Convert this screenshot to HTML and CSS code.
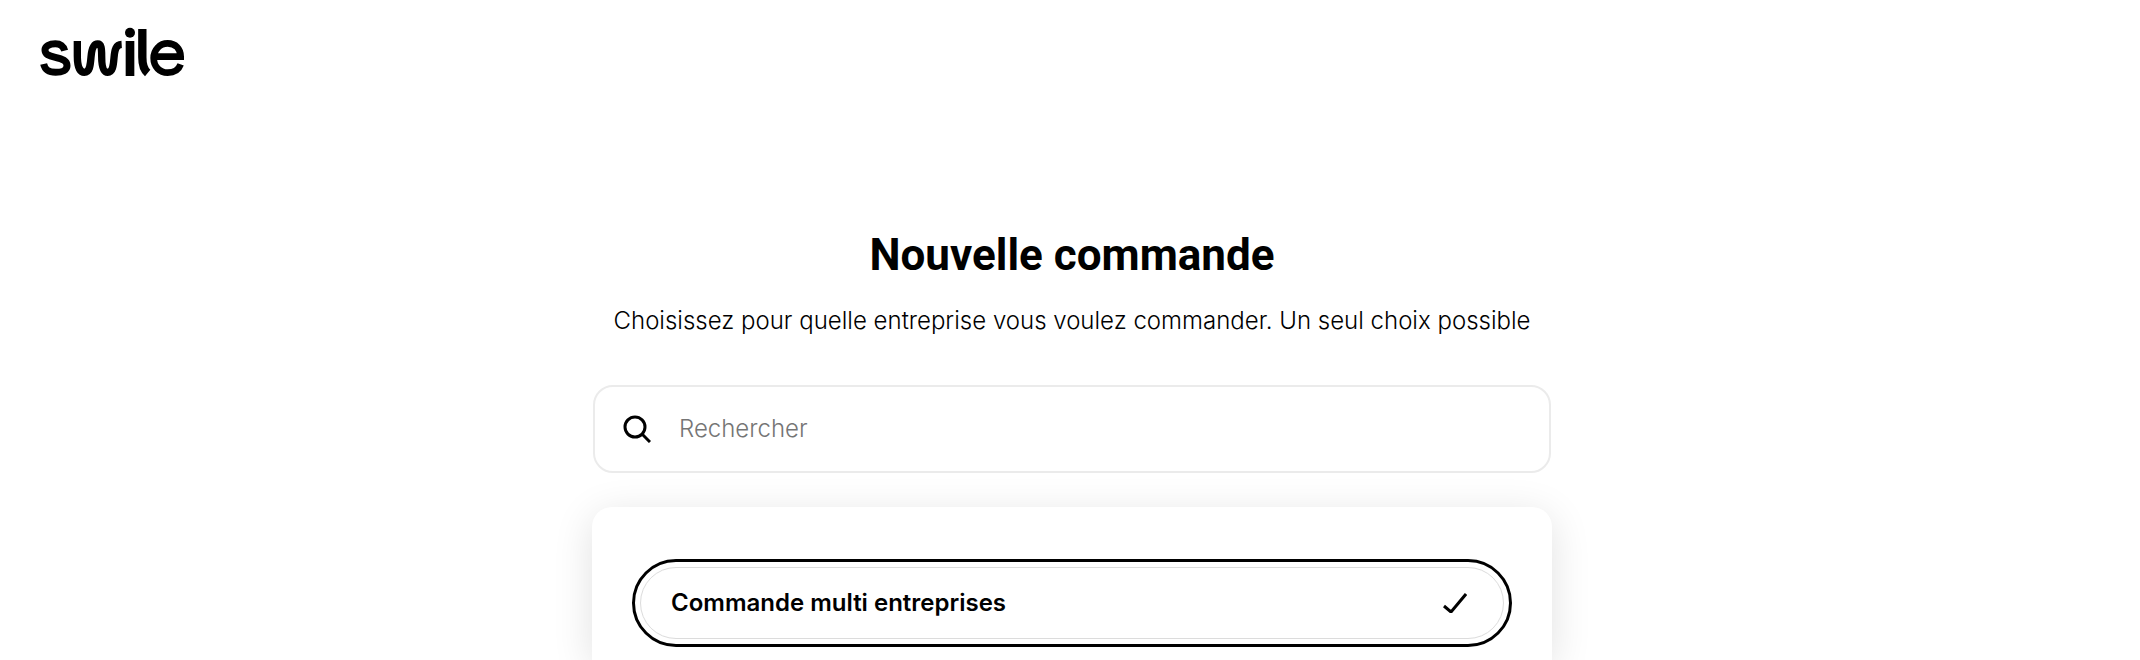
FILE: index.html
```html
<!DOCTYPE html>
<html lang="fr">
<head>
<meta charset="utf-8">
<meta name="viewport" content="width=device-width, initial-scale=1">
<title>Nouvelle commande – Swile</title>
<link rel="stylesheet" href="styles.css">
</head>
<body>
<header class="header">
  <a class="logo" href="#" aria-label="swile">
    <svg class="logo-mark" viewBox="30 21 435 150" aria-hidden="true">
      <g fill="none" stroke="currentColor" stroke-width="22">
        <path stroke-width="21" d="M104 92C100 77 90 71 76 71C58 71 45 79 45 90C45 103 56 107 76 112C98 117 111 122 111 137C111 150 97 157 77 157C55 157 45 149 41 132"/>
        <path d="M142 63V108C142 138 149 157 163 157C179 157 181 138 183 112C185 86 191 72 203 72C214 72 215 86 215 108C215 138 219 157 233 157C248 157 250 138 252 114C254 88 258 74 275 73"/>
        <path stroke-width="26" d="M300 63V168"/>
        <path stroke-width="25" d="M337 27V112C337 136 341 149 353 159"/>
        <path stroke-width="20" d="M372 110H452C452 86 436 70 413 70C389 70 371 90 371 114C371 140 389 158 413 158C432 158 446 149 452 133"/>
      </g>
      <circle cx="300" cy="38" r="15" fill="currentColor"/>
    </svg>
  </a>
</header>
<main class="main">
  <h1 class="title">Nouvelle commande</h1>
  <p class="subtitle">Choisissez pour quelle entreprise vous voulez commander. Un seul choix possible</p>
  <label class="search">
    <svg class="search-icon" viewBox="0 0 28 28" aria-hidden="true"><circle cx="12" cy="12" r="10"/><path d="M19 19l8 8"/></svg>
    <input class="search-input" type="search" placeholder="Rechercher" aria-label="Rechercher">
  </label>
  <section class="card">
    <button class="option" type="button" aria-pressed="true">
      <span class="option-label">Commande multi entreprises</span>
      <svg class="check" viewBox="0 0 24 20" aria-hidden="true"><path d="M1 13l7 6L23 1"/></svg>
    </button>
  </section>
</main>
</body>
</html>
```
FILE: styles.css
```css
* { box-sizing: border-box; }
body {
  display: flex;
  flex-direction: column;
  min-height: 100vh;
  margin: 0;
  background: #fff;
  color: #000;
  font-family: Inter, "Liberation Sans", sans-serif;
}
.header { padding: 27px 40px 0; }
.logo { display: block; width: fit-content; color: #000; }
.logo-mark { display: block; width: 145px; height: 50px; }
.main {
  display: flex;
  flex: 1;
  flex-direction: column;
  width: 100%;
  max-width: 964px;
  margin: 0 auto;
  padding: 150px 0 0 4px;
}
.title {
  margin: 0;
  font-family: Roboto, Inter, sans-serif;
  font-size: 44px;
  line-height: 56px;
  font-weight: 700;
  text-align: center;
}
.subtitle {
  margin: 22px 0 48px;
  font-size: 24px;
  line-height: 32px;
  font-weight: 300;
  text-align: center;
}
.search {
  display: flex;
  align-items: center;
  gap: 28px;
  height: 88px;
  margin: 0 1px;
  padding: 0 28px;
  border: 2px solid #ebebeb;
  border-radius: 20px;
}
.search-icon { width: 28px; height: 28px; fill: none; stroke: #000; stroke-width: 3; }
.search-input {
  flex: 1;
  min-width: 0;
  padding: 0;
  border: 0;
  outline: 0;
  background: transparent;
  font: inherit;
  font-size: 24px;
  line-height: 32px;
  font-weight: 300;
  color: #000;
}
.search-input::placeholder { color: #757575; opacity: 1; }
.card {
  flex: 1;
  margin-top: 34px;
  padding: 60px 48px 20px;
  border-radius: 20px 20px 0 0;
  background: #fff;
  box-shadow: 0 8px 40px rgba(0, 0, 0, 0.12);
}
.option {
  display: flex;
  align-items: center;
  justify-content: space-between;
  width: 100%;
  height: 72px;
  padding: 0 36px 0 30px;
  border: 1px solid #dcdcdc;
  border-radius: 36px;
  outline: 3px solid #000;
  outline-offset: 5px;
  background: #fff;
  color: #000;
  font: inherit;
  font-size: 24px;
  line-height: 32px;
  font-weight: 600;
}
.check { width: 24px; height: 20px; fill: none; stroke: #000; stroke-width: 3; }
```
